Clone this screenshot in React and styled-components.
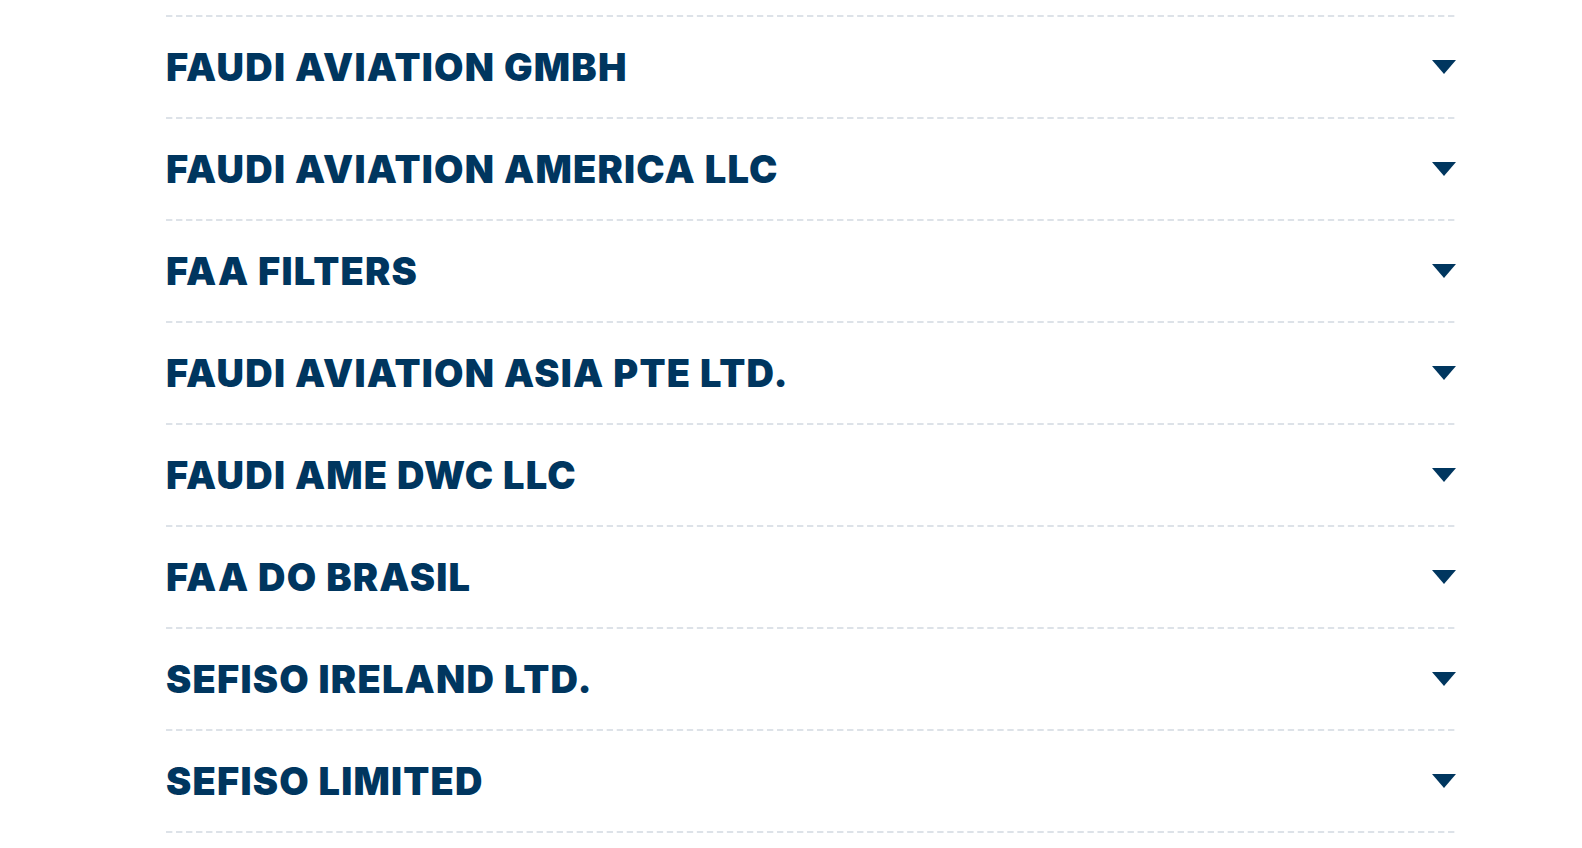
import React from "react";
import styled, { createGlobalStyle } from "styled-components";

const Global = createGlobalStyle`
  html, body { margin: 0; padding: 0; background: #ffffff; }
  body { font-family: Inter, "Liberation Sans", sans-serif; }
`;

const Page = styled.main`
  padding: 15px 126px 0 166px;
`;

const List = styled.ul`
  list-style: none;
  margin: 0;
  padding: 0;
`;

const Dash = styled.div`
  height: 2px;
  background-image: linear-gradient(to right, #dde2e8 6px, transparent 6px);
  background-size: calc((100% + 4px) / 129) 2px;
  background-repeat: repeat-x;
`;

const Item = styled.li`
  display: block;
`;

const Header = styled.button`
  all: unset;
  box-sizing: border-box;
  width: 100%;
  height: 100px;
  display: flex;
  align-items: center;
  justify-content: space-between;
  cursor: pointer;
`;

const Title = styled.span`
  font-family: Inter, "Liberation Sans", sans-serif;
  font-weight: 900;
  font-size: 38px;
  line-height: 1;
  letter-spacing: 1.2px;
  color: #00365f;
  text-transform: uppercase;
`;

const Caret = styled.svg`
  width: 24px;
  height: 14px;
  flex: none;
  display: block;
`;

const companies = [
  "FAUDI AVIATION GMBH",
  "FAUDI AVIATION AMERICA LLC",
  "FAA FILTERS",
  "FAUDI AVIATION ASIA PTE LTD.",
  "FAUDI AME DWC LLC",
  "FAA DO BRASIL",
  "SEFISO IRELAND LTD.",
  "SEFISO LIMITED",
];

export default function App() {
  return (
    <>
      <Global />
      <Page>
        <List>
          <Dash />
          {companies.map((name) => (
            <Item key={name}>
              <Header>
                <Title>{name}</Title>
                <Caret viewBox="0 0 24 14" aria-hidden="true">
                  <polygon points="0,0 24,0 12,14" fill="#00365f" />
                </Caret>
              </Header>
              <Dash />
            </Item>
          ))}
        </List>
      </Page>
    </>
  );
}
